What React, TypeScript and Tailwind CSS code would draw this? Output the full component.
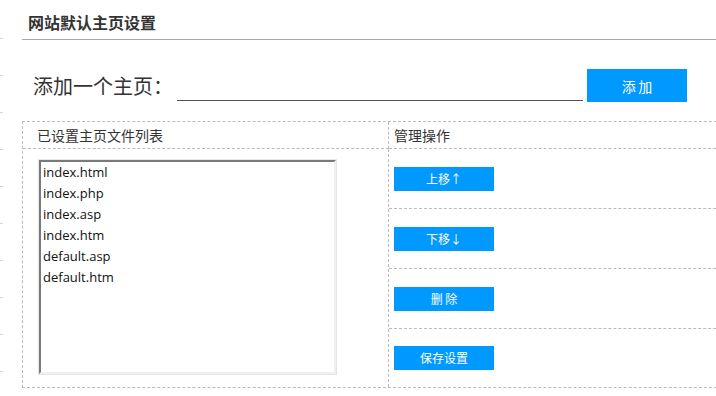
import React, { useState } from 'react';

const files = ['index.html', 'index.php', 'index.asp', 'index.htm', 'default.asp', 'default.htm'];

const actions = ['上移↑', '下移↓', '删 除', '保存设置'];

export default function App() {
  const [page, setPage] = useState('');
  const [selected, setSelected] = useState<number | null>(null);

  return (
    <div className="flex w-[716px] h-[396px] overflow-hidden bg-white text-[#333] font-['Microsoft_YaHei','Noto_Sans_CJK_SC',sans-serif]">
      {/* clipped sidebar edge */}
      <div className="w-[3px] shrink-0 pt-[2px]">
        {Array.from({ length: 10 }).map((_, i) => (
          <div key={i} className="h-[37px] border-b border-[#d4d4d4]" />
        ))}
      </div>

      <div className="ml-[19px] w-[760px] shrink-0">
        <div className="h-[40px] flex items-center pt-[4px] pl-[6px] border-b border-[#aaa]">
          <h1 className="text-[16px] font-bold text-[#333] leading-none">网站默认主页设置</h1>
        </div>

        {/* add row */}
        <div className="mt-[29px] flex items-start h-[33px] pl-[11px]">
          <span className="w-[140px] h-[33px] flex items-center text-[20px] leading-none text-[#333]">添加一个主页：</span>
          <input
            value={page}
            onChange={e => setPage(e.target.value)}
            className="ml-[4px] w-[406px] h-[32px] border-b border-[#555] outline-none px-1 text-[14px]"
          />
          <button className="ml-[4px] w-[100px] h-[33px] bg-[#0099ff] text-white text-[14px] leading-none">
            添&#8198;加
          </button>
        </div>

        {/* list table */}
        <div className="mt-[19px] border border-dashed border-[#bbb] grid grid-cols-[366px_1fr]">
          <div className="h-[27px] border-b border-r border-dashed border-[#bbb] flex items-center pl-[14px] text-[14px] leading-none">
            已设置主页文件列表
          </div>
          <div className="h-[27px] border-b border-dashed border-[#bbb] flex items-center pl-[5px] text-[14px] leading-none">
            管理操作
          </div>

          <div className="border-r border-dashed border-[#bbb] pl-[15px] pt-[10px]">
            <div className="w-[299px] h-[216px] border border-[#e6e6e6]">
              <ul className="w-full h-full border-2 border-t-[#7a7a7a] border-l-[#7a7a7a] border-r-[#f0f0f0] border-b-[#f0f0f0] pl-[2px] text-[13px] leading-[21px] text-[#111] font-['Open_Sans','Noto_Sans',sans-serif]">
                {files.map((f, i) => (
                  <li
                    key={f}
                    onClick={() => setSelected(i)}
                    className={selected === i ? 'bg-[#0078d7] text-white' : ''}
                  >
                    {f}
                  </li>
                ))}
              </ul>
            </div>
          </div>

          <div className="flex flex-col">
            {actions.map((a, i) => (
              <div
                key={a}
                className={
                  i < actions.length - 1
                    ? 'h-[60px] border-b border-dashed border-[#bbb] pt-[18px] pl-[5px]'
                    : 'h-[58px] pt-[17px] pl-[5px]'
                }
              >
                <button className="block w-[100px] h-[24px] bg-[#0099ff] text-white text-[12px] leading-none">
                  {a}
                </button>
              </div>
            ))}
          </div>
        </div>
      </div>
    </div>
  );
}
